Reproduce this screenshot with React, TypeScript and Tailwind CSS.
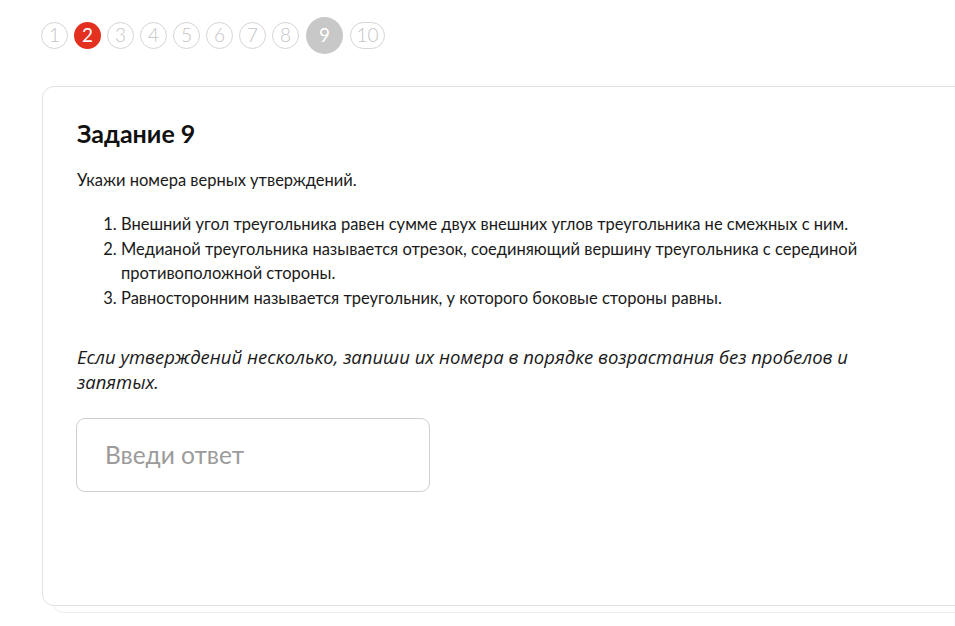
import React from 'react';

const pages = [1, 2, 3, 4, 5, 6, 7, 8, 9, 10];

// Pagination pill for one task number
const PageDot = ({ n }: { n: number }) => {
  if (n === 2) {
    return (
      <div className="w-[27px] h-[27px] rounded-full bg-[#e3301f] text-white flex items-center justify-center text-[19px]">
        {n}
      </div>
    );
  }
  if (n === 9) {
    return (
      <div className="w-[37px] h-[37px] rounded-full bg-[#c8c8c8] text-white flex items-center justify-center text-[19px] mx-[1px]">
        {n}
      </div>
    );
  }
  return (
    <div
      className={
        (n === 10 ? 'w-[35px] ' : 'w-[27px] ') +
        'h-[27px] rounded-full border border-[#d4d4d4] text-[#c4c4c4] flex items-center justify-center text-[19px] font-light'
      }
    >
      {n}
    </div>
  );
};

export default function App() {
  return (
    <div className="min-h-[626px] bg-white text-[#1a1a1a] overflow-hidden" style={{ fontFamily: 'Lato, "Noto Sans", sans-serif' }}>
      <div className="flex items-center gap-[6px] pl-[41px] pt-[17px] h-[37px] box-content">
        {pages.map(n => <PageDot key={n} n={n} />)}
      </div>

      <div className="relative ml-[42px] mt-[32px] w-[960px]">
        {/* stacked card behind */}
        <div className="absolute left-[10px] right-0 top-[10px] -bottom-[7px] rounded-[12px] border border-[#ececec] bg-white" />
        <div className="relative rounded-[12px] border border-[#e2e2e2] bg-white h-[520px] pl-[34px] pt-[31px]">
          <h1 className="text-[25px] font-bold leading-[30px] text-[#111]">Задание 9</h1>
          <p className="mt-[20px] text-[16.5px] leading-[24px]">Укажи номера верных утверждений.</p>
          <ol className="mt-[20px] list-decimal pl-[44px] text-[16.5px] leading-[24.5px] w-[836px]">
            <li>Внешний угол треугольника равен сумме двух внешних углов треугольника не смежных с ним.</li>
            <li>Медианой треугольника называется отрезок, соединяющий вершину треугольника с серединой противоположной стороны.</li>
            <li>Равносторонним называется треугольник, у которого боковые стороны равны.</li>
          </ol>
          <p
            className="mt-[34px] w-[800px] italic text-[18.5px] leading-[25px] text-[#1a1a1a]"
            style={{ fontFamily: '"Open Sans", sans-serif' }}
          >
            Если утверждений несколько, запиши их номера в порядке возрастания без пробелов и запятых.
          </p>
          <div className="mt-[24px] -ml-px w-[354px] h-[74px] rounded-[9px] border border-[#cfcfcf] flex items-center pl-[28px] text-[24.5px] text-[#9b9b9b]">
            Введи ответ
          </div>
        </div>
      </div>
    </div>
  );
}
